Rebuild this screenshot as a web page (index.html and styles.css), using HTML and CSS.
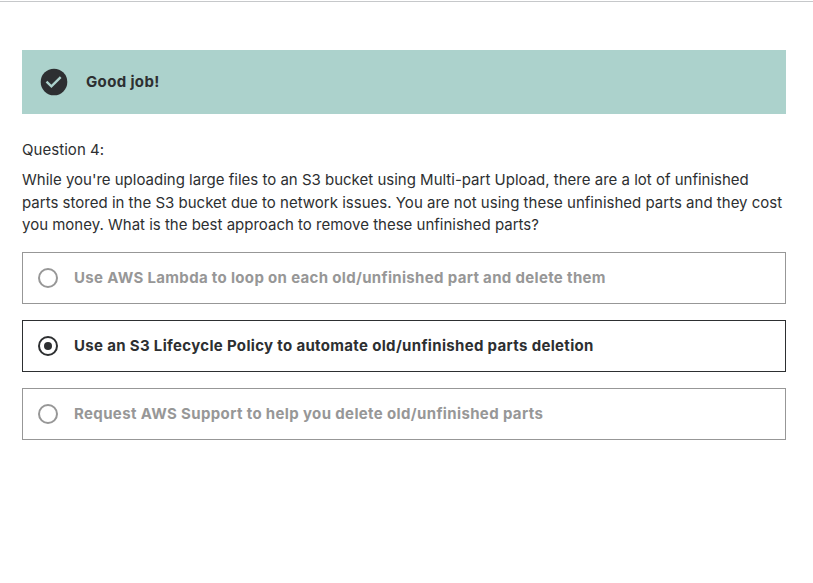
FILE: index.html
```html
<!DOCTYPE html>
<html lang="en">
<head>
<meta charset="utf-8">
<title>Quiz</title>
<link rel="stylesheet" href="styles.css">
</head>
<body>
<main class="quiz">
  <div class="alert" role="status">
    <svg class="alert-icon" viewBox="0 0 28 28" aria-hidden="true"><circle cx="14" cy="14" r="13.3" fill="#2d2f31"/><path d="M6.5 13.7l4.9 4.6L20.7 9.2" fill="none" stroke="#acd2cc" stroke-width="2.4"/></svg>
    <strong class="alert-title">Good job!</strong>
  </div>
  <div class="label">Question 4:</div>
  <p class="prompt">
    <span class="line">While you're uploading large files to an S3 bucket using Multi-part Upload, there are a lot of unfinished</span>
    <span class="line line-mid">parts stored in the S3 bucket due to network issues. You are not using these unfinished parts and they cost</span>
    <span class="line">you money. What is the best approach to remove these unfinished parts?</span>
  </p>
  <ul class="answers">
    <li class="answer"><span class="radio"></span><span class="answer-text">Use AWS Lambda to loop on each old/unfinished part and delete them</span></li>
    <li class="answer selected"><span class="radio"></span><span class="answer-text">Use an S3 Lifecycle Policy to automate old/unfinished parts deletion</span></li>
    <li class="answer"><span class="radio"></span><span class="answer-text answer-text-wide">Request AWS Support to help you delete old/unfinished parts</span></li>
  </ul>
</main>
</body>
</html>
```
FILE: styles.css
```css
* { box-sizing: border-box; }
body { margin: 0; background: #fff; color: #2d2f31; font: 15px/22.4px Inter, sans-serif; }
.quiz { border-top: 1px solid #c6c8ca; margin-top: 1px; padding: 48px 27px 0 22px; }
.alert { height: 64px; background: #acd2cc; display: flex; align-items: center; padding-left: 18px; gap: 18px; }
.alert-icon { width: 28px; height: 28px; }
.alert-title { letter-spacing: 0.35px; }
.label { margin-top: 25px; letter-spacing: 0.05px; }
.prompt { margin: 8px 0 15.4px; }
.line { display: block; white-space: nowrap; }
.line-mid { letter-spacing: 0.01px; }
.answers { list-style: none; margin: 0; padding: 0; display: grid; gap: 16px; }
.answer { height: 52px; border: 1px solid #979797; color: #979797; display: flex; align-items: center; padding-left: 15px; gap: 16px; font-weight: 700; white-space: nowrap; }
.answer-text { letter-spacing: 0.33px; }
.answer-text-wide { letter-spacing: 0.36px; }
.selected { color: #2d2f31; border-color: #2d2f31; }
.radio { width: 20px; height: 20px; border: 2px solid currentColor; border-radius: 50%; display: grid; place-items: center; }
.selected .radio::after { content: ""; width: 8px; height: 8px; border-radius: 50%; background: currentColor; }
```
